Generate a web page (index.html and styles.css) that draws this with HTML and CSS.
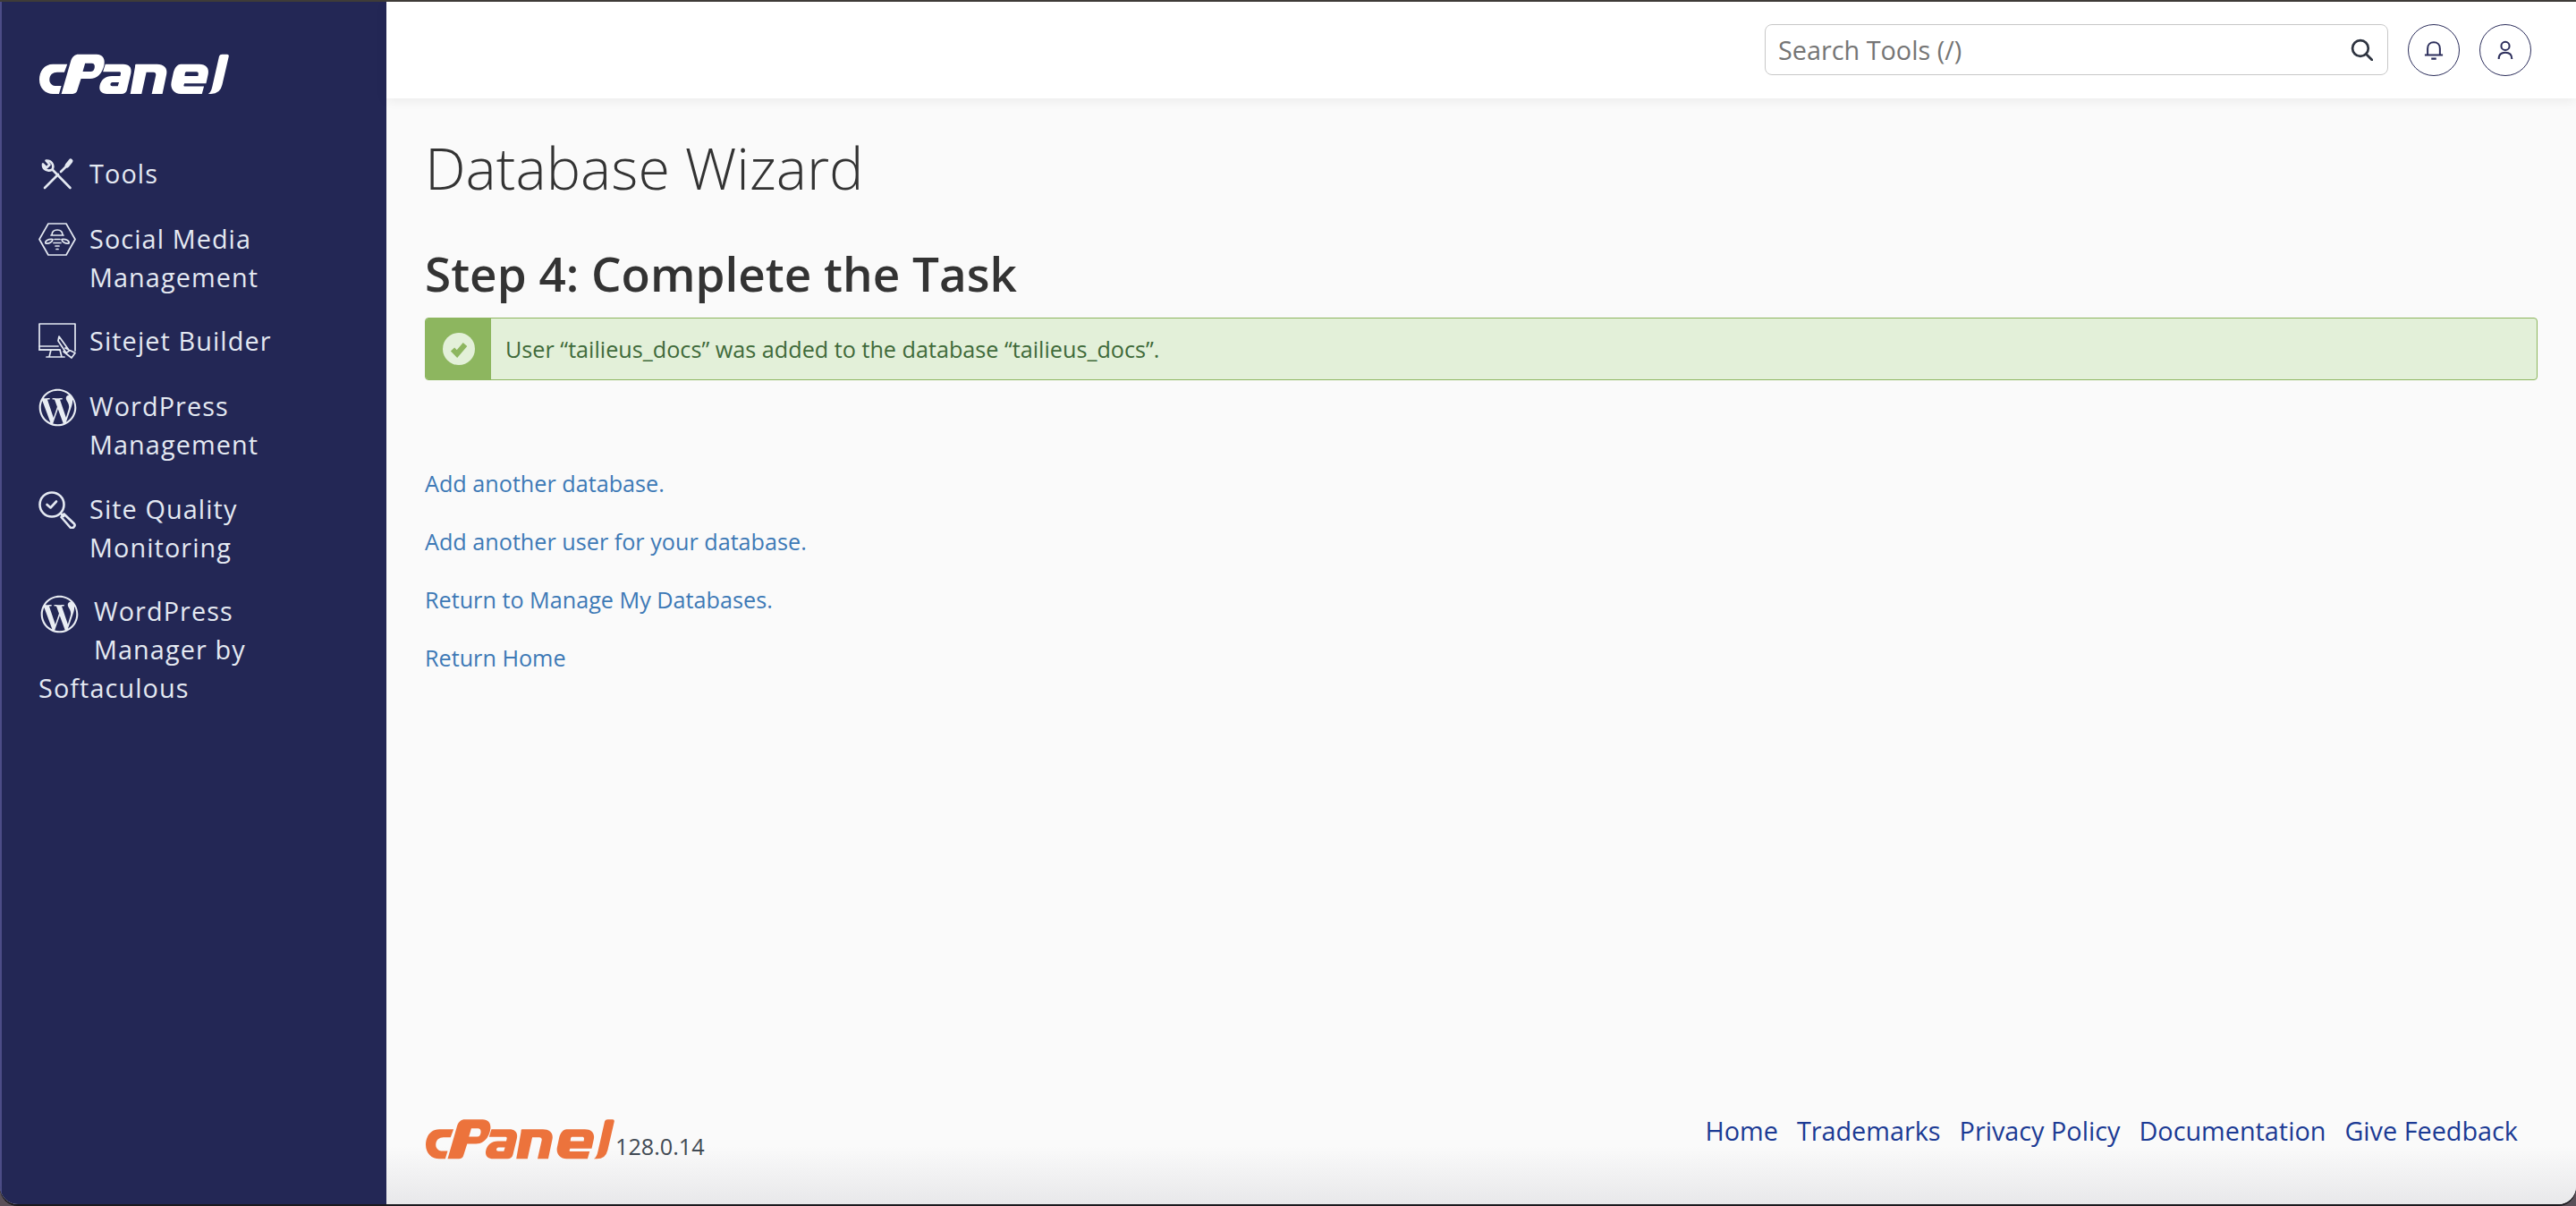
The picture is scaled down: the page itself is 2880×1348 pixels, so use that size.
FILE: index.html
```html
<!DOCTYPE html>
<html lang="en">
<head>
<meta charset="utf-8">
<title>Database Wizard</title>
<link rel="stylesheet" href="styles.css">
</head>
<body>
<svg class="defs" width="0" height="0" aria-hidden="true">
  <defs>
    <symbol id="cpanel" viewBox="40 60 638 135">
      <path d="M134 95H86C56 95 40 120 40 147C40 176 60 195 86 195H106L114 168H92C84 168 74 160 74 148C74 130 86 122 100 122H124Z"/>
      <path fill-rule="evenodd" d="M172 62H232C254 62 262 78 258 98C252 126 234 144 210 144H180L168 182C166 191 160 195 152 195H114L146 84C150 70 160 62 172 62ZM194 92 186 120H214C222 120 225 114 226 106C227 98 224 92 216 92Z"/>
      <path fill-rule="evenodd" d="M262 95H322C342 95 352 106 348 126L335 180C333 190 326 195 316 195H268C250 195 240 184 243 168C247 148 262 135 284 135H312L314 127C315 123 312 121 308 121H254ZM286 156C282 156 279 159 279 163C279 167 281 169 285 169H304L308 156Z"/>
      <path d="M366 95H436C458 95 472 108 468 128L454 195H418L432 132C433 126 430 122 424 122H400L384 195H346L362 104C363 98 361 95 366 95Z"/>
      <path fill-rule="evenodd" d="M516 95H578C600 95 612 108 608 128L601 160H528L526 165C525 168 527 170 530 170H594L587 195H516C494 195 480 178 484 156L490 128C494 108 504 95 516 95ZM536 121C533 121 530 123 530 126L529 135H574L575 128C576 124 573 121 569 121Z"/>
      <path d="M645 68Q647 62 655 62H672Q679 62 677 70L655 165Q648 195 618 195H608Q618 190 622 170Z"/>
    </symbol>
    <symbol id="wp" viewBox="0 0 512 512">
      <path d="M256 8C119.3 8 8 119.2 8 256c0 136.7 111.3 248 248 248s248-111.3 248-248C504 119.2 392.7 8 256 8zM33 256c0-32.3 6.9-63 19.3-90.7l106.4 291.4C84.3 420.5 33 344.2 33 256zm223 223c-21.9 0-43-3.2-63-9.1l66.9-194.4 68.5 187.8c.5 1.1 1 2.1 1.6 3.1-23.1 8.1-48 12.6-74 12.6zm30.7-327.5c13.4-.7 25.5-2.1 25.5-2.1 12-1.4 10.6-19.1-1.4-18.4 0 0-36.1 2.8-59.4 2.8-21.9 0-58.7-2.8-58.7-2.8-12-.7-13.4 17.7-1.4 18.4 0 0 11.4 1.4 23.4 2.1l34.7 95.2L200.6 393l-81.2-241.5c13.4-.7 25.5-2.1 25.5-2.1 12-1.4 10.6-19.1-1.4-18.4 0 0-36.1 2.8-59.4 2.8-4.2 0-9.1-.1-14.4-.3C109.6 73 178.1 33 256 33c58 0 110.9 22.2 150.6 58.5-1-.1-1.9-.2-2.9-.2-21.9 0-37.4 19.1-37.4 39.6 0 18.4 10.6 33.9 21.9 52.3 8.5 14.8 18.4 33.9 18.4 61.5 0 19.1-7.3 41.2-17 72.1l-22.2 74.3-80.7-240.1zm81.4 297.2l68.1-196.9c12.7-31.8 17-57.2 17-79.9 0-8.2-.5-15.8-1.5-22.9 17.4 31.8 27.3 68.2 27.3 107 0 82.3-44.6 154.1-110.9 192.7z"/>
    </symbol>
  </defs>
</svg>
<div class="window">
  <aside class="sidebar">
    <svg class="logo-side"><use href="#cpanel"/></svg>
    <nav class="nav">
      <a class="nav-item">
        <span class="nav-icon">
          <svg class="line-icon" viewBox="0 0 42 42"><path d="M7 36 22 21M25 18 33 10"/><path class="thick" d="M32 11 36 6"/><path d="M35.500 36 15.500 15.500M15.500 15.500C18 10 14 5 8.500 5.500L12.500 10 9 13.500 5 9.500C4.500 15 10 18.500 15.500 15.500Z"/></svg>
        </span>
        <span>Tools</span>
      </a>
      <a class="nav-item">
        <span class="nav-icon">
          <svg class="line-icon thin" viewBox="0 0 42 42"><path d="M1 20.500 11 3H31L41 20.500 31 38H11Z"/><path d="M15 16C15 12 17.500 10 21 10S27 12 27 16M14 16H28M18 20.500H24M17 24.500H25M19 28H23M20 31.500H22"/><path d="M8 25C7 22 11 20 16 20.500 16 23 12 26 8 25ZM34 25C35 22 31 20 26 20.500 26 23 30 26 34 25Z"/></svg>
        </span>
        <span>Social Media<br>Management</span>
      </a>
      <a class="nav-item">
        <span class="nav-icon">
          <svg class="line-icon thin" viewBox="0 0 42 42"><path d="M41 31V1H1V30H24"/><path d="M1 26H22M1 30H24M14 30 12 38M24 30 26 38M9 38H29"/><path d="M23 15 34.500 31 31 33.500 22 20ZM30 28 41 33.500 37 39 28 32"/></svg>
        </span>
        <span>Sitejet Builder</span>
      </a>
      <a class="nav-item">
        <span class="nav-icon">
          <svg class="wp-icon"><use href="#wp"/></svg>
        </span>
        <span>WordPress<br>Management</span>
      </a>
      <a class="nav-item">
        <span class="nav-icon">
          <svg class="line-icon" viewBox="0 0 42 42"><circle cx="15" cy="15" r="13.500"/><path d="M9.500 15 13.500 18.500 20 11.500"/><path d="M25 25 28 28"/><path d="M28.500 25.500 40 36.500C42 39 38 42.500 35.500 40.500L25.500 29Z"/></svg>
        </span>
        <span>Site Quality<br>Monitoring</span>
      </a>
      <a class="nav-item nav-item-flow">
        <svg class="wp-icon wp-float"><use href="#wp"/></svg>
        <span>WordPress Manager by Softaculous</span>
      </a>
    </nav>
  </aside>
  <div class="content">
    <header class="topbar">
      <div class="search">
        <span class="search-text">Search Tools (/)</span>
        <svg class="search-icon" viewBox="0 0 24 24"><circle cx="10.500" cy="10.500" r="8.500"/><path d="M17 17 23 23"/></svg>
      </div>
      <span class="round-btn">
        <svg viewBox="0 0 24 24"><path d="M4.500 17.500V10C4.500 5.500 7.500 2.500 12 2.500S19.500 5.500 19.500 10V17.500M1 18H23M9 22.500H15"/></svg>
      </span>
      <span class="round-btn">
        <svg viewBox="0 0 24 24"><circle cx="12" cy="7" r="5"/><path d="M4 23C4 17.500 7 15 12 15S20 17.500 20 23"/></svg>
      </span>
    </header>
    <main class="main">
      <h1 class="title">Database Wizard</h1>
      <h2 class="step">Step 4: Complete the Task</h2>
      <div class="alert">
        <span class="alert-side">
          <svg class="check" viewBox="0 0 36 36"><circle cx="18" cy="18" r="18"/><path d="M11 18.500 16 23.500 25 13"/></svg>
        </span>
        <span class="alert-text">User “tailieus_docs” was added to the database “tailieus_docs”.</span>
      </div>
      <div class="links">
        <a class="link">Add another database.</a>
        <a class="link">Add another user for your database.</a>
        <a class="link">Return to Manage My Databases.</a>
        <a class="link">Return Home</a>
      </div>
    </main>
    <footer class="footer">
      <div class="brand">
        <svg class="logo-foot"><use href="#cpanel"/></svg>
        <span class="version">128.0.14</span>
      </div>
      <div class="foot-links">
        <a>Home</a>
        <a>Trademarks</a>
        <a>Privacy Policy</a>
        <a>Documentation</a>
        <a>Give Feedback</a>
      </div>
    </footer>
  </div>
</div>
</body>
</html>
```

FILE: styles.css
```css
* { box-sizing: border-box; }
html, body { margin: 0; height: 100%; }
body {
  background: #5a5058;
  font-family: "Open Sans", sans-serif;
  overflow: hidden;
}
.defs { position: absolute; }
.window {
  display: flex;
  height: 1346px;
  border-top: 2px solid #3f3c38;
  border-radius: 0 0 20px 20px;
  overflow: hidden;
  background: #fafafa;
  box-shadow: 0 2px 0 #1b1a1e;
}
.sidebar {
  flex: 0 0 432px;
  background: #232755;
  border-left: 2px solid #4c4c86;
  padding: 58px 0 0 41px;
  color: #e4e9f2;
}
.logo-side {
  display: block;
  width: 212px;
  height: 45px;
  margin-left: 1px;
  fill: #fff;
}
.nav {
  display: flex;
  flex-direction: column;
  gap: 28.7px;
  margin-top: 67px;
  font-size: 28.8px;
  line-height: 43px;
  letter-spacing: 1.1px;
}
.nav-item { display: flex; width: 350px; }
.nav-icon {
  flex: 0 0 57px;
  display: block;
  padding-top: 2px;
}
.line-icon {
  display: block;
  width: 42px;
  height: 42px;
  fill: none;
  stroke: #e4e9f2;
  stroke-width: 2.6;
  stroke-linecap: round;
  stroke-linejoin: round;
}
.line-icon.thin { stroke-width: 1.7; }
.line-icon .thick { stroke-width: 5; }
.wp-icon {
  display: block;
  width: 43px;
  height: 43px;
  fill: #e9edf3;
}
.nav-item-flow { display: block; width: 290px; }
.wp-float {
  float: left;
  margin: 4px 17px 39px 2px;
}
.content {
  flex: 1;
  display: flex;
  flex-direction: column;
  min-width: 0;
}
.topbar {
  flex: 0 0 108px;
  display: flex;
  align-items: center;
  justify-content: flex-end;
  gap: 22px;
  padding: 23px 50px 24px 0;
  background: #fff;
  box-shadow: 0 2px 12px rgba(0, 0, 0, .07);
  position: relative;
}
.search {
  width: 697px;
  height: 57px;
  display: flex;
  align-items: center;
  justify-content: space-between;
  padding: 0 16px 0 14px;
  border: 1.5px solid #c8c8c8;
  border-radius: 8px;
  background: #fff;
}
.search-text {
  font-size: 28.8px;
  color: #757575;
}
.search-icon {
  width: 25px;
  height: 25px;
  fill: none;
  stroke: #2e3440;
  stroke-width: 2.6;
  stroke-linecap: round;
}
.round-btn {
  width: 58px;
  height: 58px;
  display: flex;
  align-items: center;
  justify-content: center;
  border: 1.5px solid #2d2f5c;
  border-radius: 50%;
  background: #fff;
}
.round-btn svg {
  width: 22px;
  height: 24px;
  fill: none;
  stroke: #2d2f5c;
  stroke-width: 2.2;
}
.main {
  flex: 1;
  padding: 32px 43px 0 43px;
}
.title {
  margin: 0;
  font-size: 64.6px;
  font-weight: 300;
  line-height: 90px;
  color: #333;
}
.step {
  margin: 39px 0 0;
  font-size: 53px;
  font-weight: 600;
  line-height: 70px;
  color: #333;
}
.alert {
  display: flex;
  height: 70px;
  margin-top: 14px;
  border: 1px solid #8db65f;
  border-radius: 4px;
  background: #e3f0d9;
  overflow: hidden;
}
.alert-side {
  flex: 0 0 73px;
  display: flex;
  align-items: center;
  justify-content: center;
  background: #8db65f;
}
.check {
  width: 36px;
  height: 36px;
}
.check circle { fill: #e3f0d9; }
.check path {
  fill: none;
  stroke: #8db65f;
  stroke-width: 6;
}
.alert-text {
  align-self: center;
  padding-left: 16px;
  font-size: 25.2px;
  color: #3f6a3a;
}
.links {
  display: flex;
  flex-direction: column;
  gap: 30px;
  margin-top: 98px;
}
.link {
  font-size: 25.2px;
  line-height: 35px;
  color: #3d79b6;
}
.footer {
  flex: 0 0 130px;
  display: flex;
  align-items: flex-start;
  justify-content: space-between;
  padding: 29px 65px 0 44px;
  background: linear-gradient(#fafafa 50%, #e8e8ea 100%);
}
.brand {
  display: flex;
  align-items: flex-end;
  gap: 1px;
  margin-top: 5px;
}
.logo-foot {
  display: block;
  width: 211px;
  height: 46px;
  fill: #ec733c;
}
.version {
  font-size: 25.2px;
  line-height: 30px;
  color: #414a54;
}
.foot-links {
  display: flex;
  gap: 21px;
  font-size: 28.8px;
  line-height: 38px;
  color: #1b3a94;
}
```
